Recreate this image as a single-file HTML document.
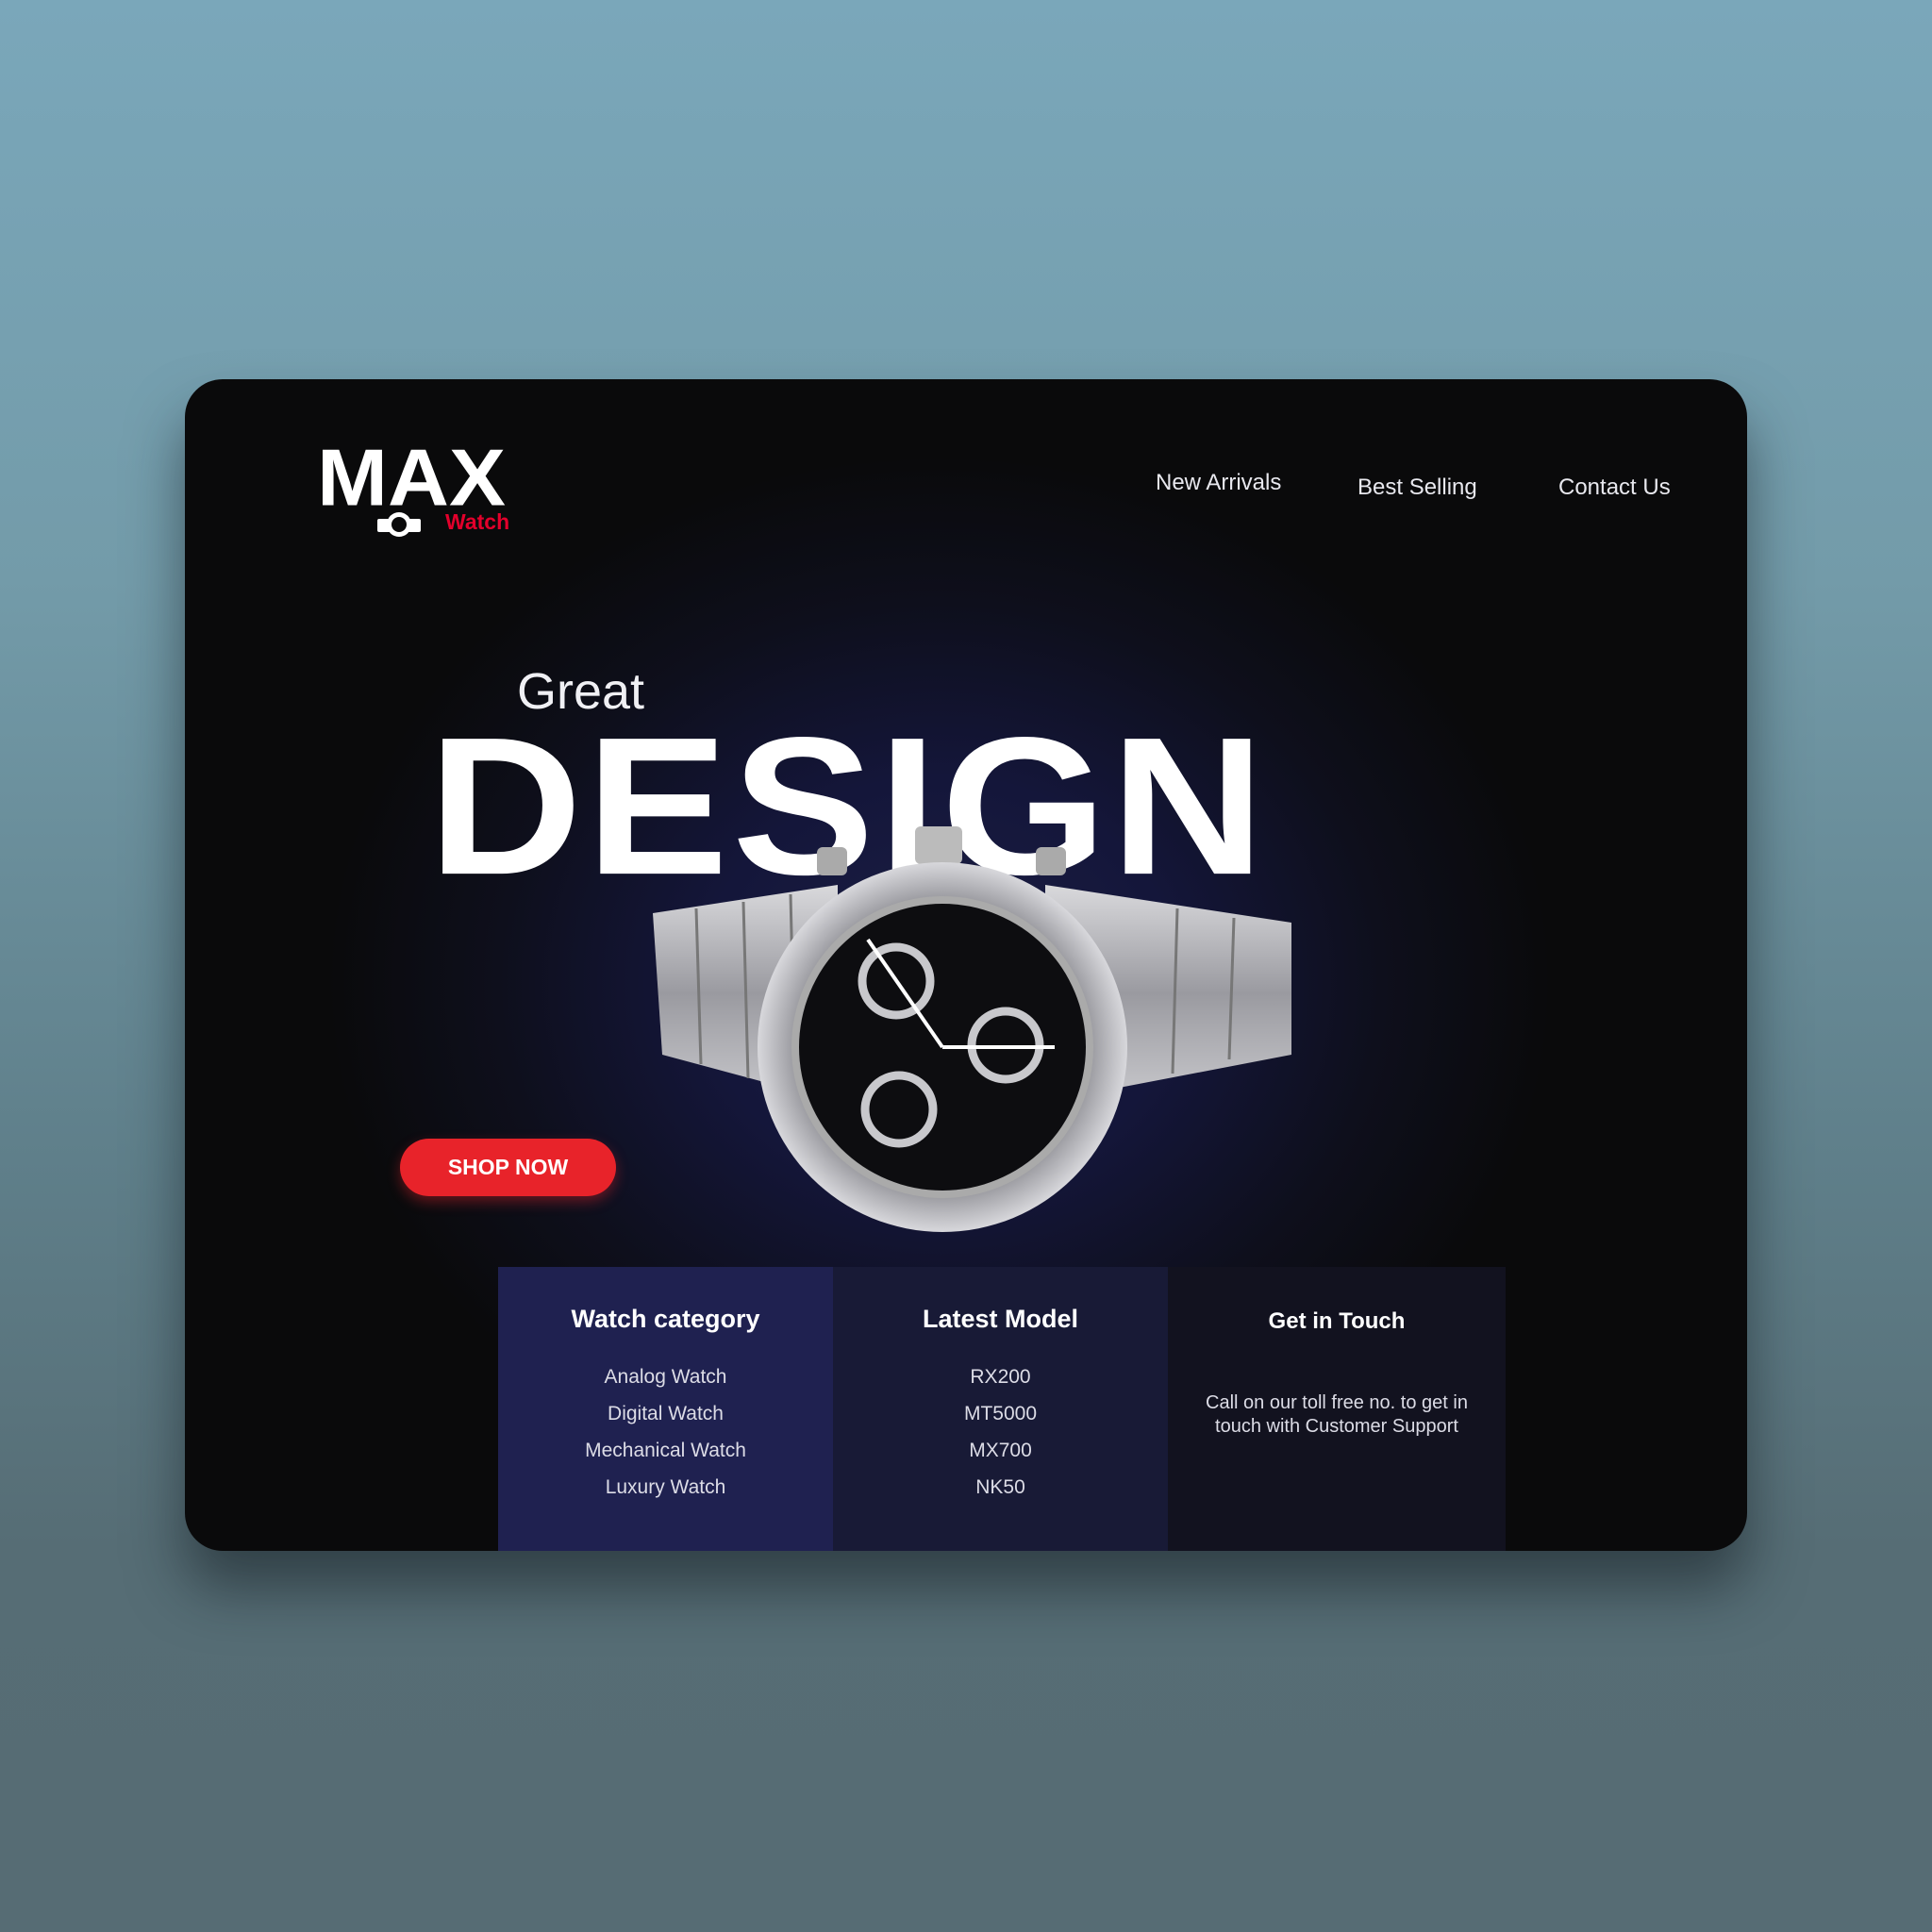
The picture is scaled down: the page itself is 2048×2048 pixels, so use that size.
<!DOCTYPE html>
<html><head><meta charset="utf-8"><style>
*{margin:0;padding:0;box-sizing:border-box}
body{width:2048px;height:2048px;overflow:hidden;background:linear-gradient(180deg,#7aa7ba 0%,#739ba9 30%,#5f7f8a 60%,#566d75 80%,#566c74 100%);font-family:"Liberation Sans",sans-serif;position:relative}
.card{position:absolute;left:196px;top:402px;width:1656px;height:1242px;border-radius:40px;overflow:hidden;background:radial-gradient(ellipse 720px 620px at 800px 640px,#1c1f45 0%,#14163a 35%,#0e0f1c 65%,#0a0a0b 90%);box-shadow:0 40px 60px rgba(20,30,35,.55)}
.t{position:absolute;color:#fff;white-space:nowrap}
.nav{font-size:24px;color:#e8e8ee}
.col{position:absolute;top:941px;height:301px;width:355px;text-align:center;color:#fff}
.col h3{font-size:27px;font-weight:bold;margin-top:40px}
.col p{font-size:21px;line-height:39px;color:#dcdce6}
</style></head><body>
<div class="card">
 <div class="t" style="left:140px;top:54px;font-size:90px;font-weight:bold;letter-spacing:0px;transform:scaleY(0.95)">MAX</div>
 <div class="t" style="left:276px;top:138px;font-size:23px;font-weight:bold;color:#e3002b">Watch</div>
 <svg style="position:absolute;left:204px;top:140px" width="46" height="28" viewBox="0 0 46 28"><rect x="0" y="8" width="46" height="14" rx="2" fill="#fff"/><circle cx="23" cy="14" r="13" fill="#fff"/><circle cx="23" cy="14" r="8" fill="#0a0a0b"/></svg>
 <div class="t nav" style="left:1029px;top:96px">New Arrivals</div>
 <div class="t nav" style="left:1243px;top:101px">Best Selling</div>
 <div class="t nav" style="left:1456px;top:101px">Contact Us</div>
 <div class="t" style="left:352px;top:300px;font-size:54px;color:#f0f0f4">Great</div>
 <div class="t" style="left:258px;top:343px;font-size:226px;font-weight:bold;letter-spacing:4px;line-height:1;transform:scaleY(0.92);transform-origin:0 30%">DESIGN</div>
 <svg style="position:absolute;left:492px;top:466px" width="690" height="440" viewBox="0 0 690 440">
  <defs><linearGradient id="br" x1="0" y1="0" x2="0" y2="1"><stop offset="0" stop-color="#d9d9dc"/><stop offset=".5" stop-color="#9a9aa0"/><stop offset="1" stop-color="#c8c8cc"/></linearGradient>
  <radialGradient id="bz"><stop offset=".75" stop-color="#8a8a90"/><stop offset="1" stop-color="#d8d8dc"/></radialGradient></defs>
  <path d="M4 100 L200 70 L200 300 L14 250 Z" fill="url(#br)"/>
  <path d="M420 70 L681 110 L681 250 L420 300 Z" fill="url(#br)"/>
  <g stroke="#777" stroke-width="3"><line x1="50" y1="95" x2="55" y2="260"/><line x1="100" y1="88" x2="105" y2="275"/><line x1="150" y1="80" x2="155" y2="290"/><line x1="560" y1="95" x2="555" y2="270"/><line x1="620" y1="105" x2="615" y2="255"/></g>
  <rect x="178" y="30" width="32" height="30" rx="6" fill="#aaa"/><rect x="410" y="30" width="32" height="30" rx="6" fill="#aaa"/><rect x="282" y="8" width="50" height="40" rx="6" fill="#bbb"/>
  <circle cx="311" cy="242" r="196" fill="url(#bz)"/>
  <circle cx="311" cy="242" r="160" fill="#aaa"/>
  <circle cx="311" cy="242" r="152" fill="#0d0d10"/>
  <g fill="none" stroke="#c8c8cc" stroke-width="9"><circle cx="262" cy="172" r="36"/><circle cx="378" cy="240" r="36"/><circle cx="265" cy="308" r="36"/></g>
  <g stroke="#fff" stroke-width="4"><line x1="311" y1="242" x2="232" y2="128"/><line x1="311" y1="242" x2="430" y2="242"/></g>
 </svg>
 <div style="position:absolute;left:228px;top:805px;width:229px;height:61px;border-radius:31px;background:#e8232a;box-shadow:0 6px 14px rgba(232,35,42,.4);color:#fff;font-weight:bold;font-size:23px;text-align:center;line-height:61px">SHOP NOW</div>
 <div class="col" style="left:332px;background:#1f2150"><h3>Watch category</h3><p style="margin-top:26px">Analog Watch<br>Digital Watch<br>Mechanical Watch<br>Luxury Watch</p></div>
 <div class="col" style="left:687px;background:#181a36"><h3>Latest Model</h3><p style="margin-top:26px">RX200<br>MT5000<br>MX700<br>NK50</p></div>
 <div class="col" style="left:1042px;width:358px;background:#12121f"><h3 style="font-size:24px;margin-top:44px">Get in Touch</h3><p style="margin-top:60px;line-height:25px;font-size:20px">Call on our toll free no. to get in<br>touch with Customer Support</p></div>
</div>
</body></html>
